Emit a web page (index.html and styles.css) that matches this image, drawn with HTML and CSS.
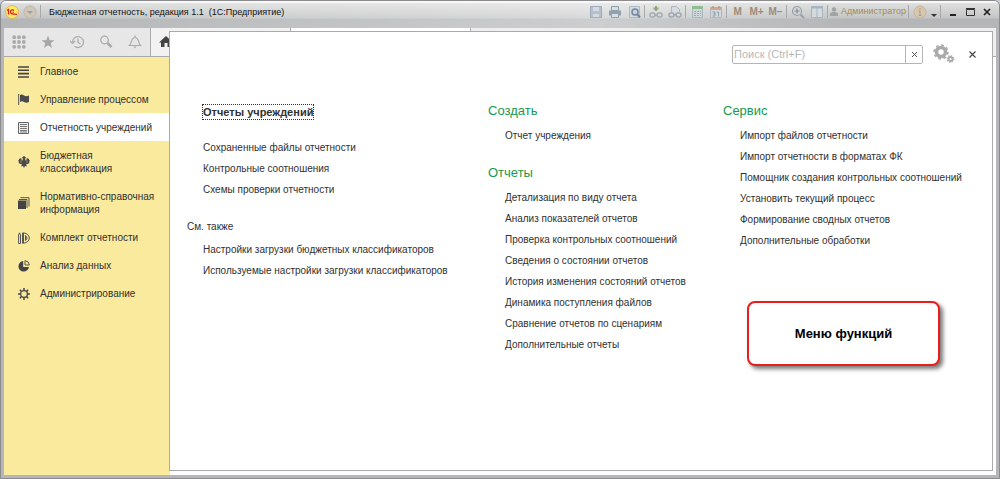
FILE: index.html
```html
<!DOCTYPE html>
<html lang="ru">
<head>
<meta charset="utf-8">
<title>Бюджетная отчетность, редакция 1.1</title>
<link rel="stylesheet" href="styles.css">
</head>
<body>
<div class="window">
  <header class="titlebar">
    <svg class="logo" width="14" height="14" viewBox="0 0 14 14"><circle cx="7" cy="7" r="6.500" fill="#fbe96a" stroke="#e2b94a"/><path d="M2 5.500L3.500 4.500V9.500M8.800 5.700C8 4.200 5.500 4.800 5.500 7S7.200 9.300 12 9.300M8.800 7.300H7.500" fill="none" stroke="#d8261c" stroke-width="1.300"/></svg>
    <button class="round" aria-label="Меню"><svg width="14" height="14" viewBox="0 0 14 14"><circle cx="7" cy="7" r="6.200" fill="#cfc6bb" stroke="#c2b6a6"/><path d="M4 6H10L7 9Z" fill="#a59c92"/></svg></button>
    <i class="sep lead"></i>
    <h1 class="title">Бюджетная отчетность, редакция 1.1&nbsp; (1С:Предприятие)</h1>
    <div class="group">
      <button class="tool" aria-label="Сохранить"><svg width="14" height="14" viewBox="0 0 14 14"><path d="M1.500 1.500H12.500V12.500H1.500Z" fill="#b4c0cb" stroke="#9fadba"/><path d="M4 2H10V6H4ZM4 9H10V12H4Z" fill="#d5dce1"/></svg></button>
      <button class="tool" aria-label="Печать"><svg width="14" height="14" viewBox="0 0 14 14"><path d="M1 5.500H13V10.500H1Z" fill="#91a0ad"/><path d="M3.500 1.500H10.500V5.500H3.500ZM3.500 8.500H10.500V12.500H3.500Z" fill="#d8dee2" stroke="#91a0ad"/></svg></button>
      <button class="tool" aria-label="Просмотр"><svg width="14" height="14" viewBox="0 0 14 14"><path d="M2.500 1.500H12.500V12.500H2.500Z" fill="#d3dae0" stroke="#aebac4"/><circle cx="8" cy="7" r="3" fill="#c6d3de" stroke="#75879a" stroke-width="1.500"/><path d="M10 9L13 12.500" stroke="#75879a" stroke-width="2"/></svg></button>
      <i class="sep"></i>
      <button class="tool" aria-label="Получить ссылку"><svg width="14" height="14" viewBox="0 0 14 14"><path d="M7 1V6M4.500 3.500H9.500" stroke="#91a779" stroke-width="2"/><rect x="1" y="8" width="5" height="4" rx="2" fill="none" stroke="#a4adb4" stroke-width="1.500"/><rect x="8" y="8" width="5" height="4" rx="2" fill="none" stroke="#a4adb4" stroke-width="1.500"/><path d="M5 10H9" stroke="#a4adb4" stroke-width="1.500"/></svg></button>
      <button class="tool" aria-label="Перейти по ссылке"><svg width="14" height="14" viewBox="0 0 14 14"><path d="M3.500 7V1.500H8.500L11.500 4.500V7" fill="#d6dce1" stroke="#a9b5bf"/><rect x="1" y="8" width="5" height="4" rx="2" fill="none" stroke="#9ca9b4" stroke-width="1.500"/><rect x="8" y="8" width="5" height="4" rx="2" fill="none" stroke="#9ca9b4" stroke-width="1.500"/><path d="M5 10H9" stroke="#9ca9b4" stroke-width="1.500"/></svg></button>
      <i class="sep"></i>
      <button class="tool" aria-label="Калькулятор"><svg width="14" height="14" viewBox="0 0 14 14"><path d="M2.500 1.500H12.500V12.500H2.500Z" fill="#cfd8da" stroke="#a9b8bc"/><path d="M2 1H13V4H2Z" fill="#91bd94"/><path d="M4 6.500H11M4 8.500H11M4 10.500H11" stroke="#9aaab5" stroke-dasharray="2 1"/></svg></button>
      <button class="tool" aria-label="Календарь"><svg width="14" height="14" viewBox="0 0 14 14"><path d="M1.500 2.500H12.500V12.500H1.500Z" fill="#d2d8dc" stroke="#abb8c2"/><path d="M1 2H13V5H1Z" fill="#cdaa92"/><path d="M3.500 7H6V11H3.500M4 9H6M8 7.500L9.500 7V11.500" fill="none" stroke="#91a0ad"/><path d="M4 1V3M10 1V3" stroke="#a98469"/></svg></button>
      <i class="sep"></i>
      <button class="tool memory">M</button>
      <button class="tool memory">M+</button>
      <button class="tool memory">M−</button>
      <i class="sep"></i>
      <button class="tool" aria-label="Масштаб"><svg width="14" height="14" viewBox="0 0 14 14"><circle cx="6" cy="6" r="4.500" fill="#d2d5d7" stroke="#9ba0a4" stroke-width="1.200"/><path d="M9.500 9.500L13 13" stroke="#9ba0a4" stroke-width="2"/><path d="M6 3.500V8.500M3.500 6H8.500" stroke="#858b90" stroke-width="1.200"/></svg></button>
      <button class="tool" aria-label="Окна"><svg width="14" height="14" viewBox="0 0 14 14"><path d="M1.500 1.500H12.500V12.500H1.500ZM7 2V12" fill="#d4dade" stroke="#a6b5c2"/><path d="M1 1H13V3.500H1Z" fill="#a6b5c2"/></svg></button>
      <i class="sep"></i>
      <button class="user"><svg width="8" height="10" viewBox="0 0 8 10"><circle cx="4" cy="2.500" r="2.200" fill="#a3a3a3"/><path d="M0 9V7Q0 5 4 5T8 7V9Z" fill="#a3a3a3"/></svg>Администратор</button>
      <i class="sep"></i>
      <button class="tool" aria-label="О программе"><svg width="14" height="14" viewBox="0 0 14 14"><circle cx="7" cy="7" r="6" fill="#d8c8b1" stroke="#c9b395"/><path d="M7 3V4.500M5.500 6H7V10.500M5.500 10.500H8.500" fill="none" stroke="#aaa091" stroke-width="1.200"/></svg></button>
      <button class="tool narrow" aria-label="Еще"><svg width="8" height="14" viewBox="0 0 8 14"><path d="M1 9H7L4 12Z" fill="#333"/></svg></button>
    </div>
    <i class="sep"></i>
    <div class="controls">
      <button class="tool" aria-label="Свернуть"><svg width="14" height="14" viewBox="0 0 14 14"><path d="M4 10H10" stroke="#222" stroke-width="2"/></svg></button>
      <button class="tool" aria-label="Развернуть"><svg width="14" height="14" viewBox="0 0 14 14"><path d="M3.500 4.500H11.500V10.500H3.500ZM3 3.500H12" fill="none" stroke="#333"/></svg></button>
      <button class="tool" aria-label="Закрыть"><svg width="14" height="14" viewBox="0 0 14 14"><path d="M4 4L10 10M10 4L4 10" stroke="#222" stroke-width="1.700"/></svg></button>
    </div>
  </header>

  <div class="client">
    <div class="toolbar">
      <div class="quick">
        <button class="quick-btn" aria-label="Разделы"><svg width="14" height="14" viewBox="0 0 14 14" fill="#aaa"><g id="r"><circle cx="2.200" cy="2.200" r="1.900"/><circle cx="7" cy="2.200" r="1.900"/><circle cx="11.800" cy="2.200" r="1.900"/></g><use href="#r" y="4.800"/><use href="#r" y="9.600"/></svg></button>
        <button class="quick-btn" aria-label="Избранное"><svg width="14" height="14" viewBox="0 0 14 14"><path d="M7 .5L8.700 5.300H13.500L9.700 8.200L11.100 13L7 10.200L2.900 13L4.300 8.200L.5 5.300H5.300Z" fill="#a6a6a6"/></svg></button>
        <button class="quick-btn" aria-label="История"><svg width="14" height="14" viewBox="0 0 14 14" fill="none" stroke="#aaa" stroke-width="1.200"><path d="M2.500 7A5.500 5.500 0 1 1 4.500 11.300M0 6L2.500 8.500L5 6M8 3.500V7.500L10.500 9"/></svg></button>
        <button class="quick-btn" aria-label="Поиск"><svg width="14" height="14" viewBox="0 0 14 14" fill="none" stroke="#aaa"><circle cx="5.500" cy="5" r="3.800" stroke-width="1.200"/><path d="M8.500 8L12.500 12" stroke-width="2.500"/></svg></button>
        <button class="quick-btn" aria-label="Оповещения"><svg width="14" height="14" viewBox="0 0 14 14"><path d="M1.500 10.500C4 8 3 2.500 7 2.500S10 8 12.500 10.500ZM7 .5V2.500" fill="none" stroke="#aaa" stroke-width="1.200"/><path d="M5.500 11.500H8.500L7 13.500Z" fill="#aaa"/></svg></button>
      </div>
      <div class="tab home"><svg width="14" height="12" viewBox="0 0 14 12"><path d="M7 0L0 6.500H2V11H5.500V7H8.500V11H12V6.500H14Z" fill="#444"/></svg></div>
      <div class="tab active"></div>
    </div>

    <nav class="sections">
      <a class="section" href="#"><svg width="12" height="12" viewBox="0 0 12 12"><path d="M0 1H11M0 4.300H11M0 7.600H11M0 11H11" stroke="#444" stroke-width="1.600"/></svg>Главное</a>
      <a class="section" href="#"><svg width="12" height="12" viewBox="0 0 12 12"><path d="M.7 0V11" stroke="#555"/><path d="M2 1Q4 0 6 1.500T11 1.500V8Q8 9.500 6 8T2 8Z" fill="#4a4a4a"/></svg>Управление процессом</a>
      <a class="section current" href="#"><svg width="12" height="12" viewBox="0 0 12 12"><path d="M.5 .5H10.500V11.500H.5Z" fill="#eee" stroke="#666"/><path d="M2 2.500H9M2 4.500H9M2 6.500H9M2 8.500H9M2 10H9" stroke="#777"/></svg>Отчетность учреждений</a>
      <a class="section" href="#"><svg width="12" height="12" viewBox="0 0 12 12"><path d="M5 3L4 1.500L5 .8L6 0L7 .8L8 1.500L7 3L8 5L9 1.500L10 3L11 2.500V4L12 4.500L11 6L11.500 7L9.500 8L8 8.500L9 10.500L7 10L6 12L5 10L3 10.500L4 8.500L2.500 8L.5 7L1 6L0 4.500L1 4V2.500L2 3L3 1.500L4 5Z" fill="#4a4a4a"/><path d="M3 4V7M9 4V7" stroke="#a9a078" stroke-width=".6"/></svg>Бюджетная классификация</a>
      <a class="section" href="#"><svg width="12" height="12" viewBox="0 0 12 12"><path d="M0 3.500H8V12H0Z" fill="#444"/><path d="M1 2.500H9V11M2.500 .7H11V9.500" fill="none" stroke="#555"/></svg>Нормативно-справочная информация</a>
      <a class="section" href="#"><svg width="12" height="12" viewBox="0 0 12 12" fill="none" stroke="#555"><path d="M.6 3L1.500 .8L2.500 3V11.500H.6ZM4.500 .7V11.500M5.500 .8Q11.300 2 11.300 6T5.500 11.300ZM7.500 3.500Q9 4.500 9 6T7.500 8.500Z"/></svg>Комплект отчетности</a>
      <a class="section" href="#"><svg width="12" height="12" viewBox="0 0 12 12"><path d="M5.200 1A5.300 5.300 0 1 0 11 7H5.200Z" fill="#444"/><path d="M7 .6A5 5 0 0 1 11.400 5H7Z" fill="none" stroke="#555"/></svg>Анализ данных</a>
      <a class="section" href="#"><svg width="12" height="12" viewBox="0 0 12 12" fill="none" stroke="#444"><circle cx="6" cy="6" r="3.400" stroke-width="1.300"/><path d="M6 0V2.500M6 9.500V12M0 6H2.500M9.500 6H12M1.800 1.800L3.500 3.500M8.500 8.500L10.200 10.200M10.200 1.800L8.500 3.500M3.500 8.500L1.800 10.200" stroke-width="1.500"/></svg>Администрирование</a>
    </nav>

    <main class="panel">
      <div class="panel-head">
        <div class="search">
          <input class="search-input" type="text" placeholder="Поиск (Ctrl+F)" aria-label="Поиск">
          <button class="search-clear" aria-label="Очистить"><svg width="7" height="7" viewBox="0 0 7 7"><path d="M1 1L6 6M6 1L1 6" stroke="#555"/></svg></button>
        </div>
        <button class="settings" aria-label="Настройки"><svg width="22" height="20" viewBox="0 0 22 20" fill="none" stroke="#aaa"><circle cx="8" cy="8" r="4.500" stroke-width="3.600"/><circle cx="8" cy="8" r="6.900" stroke-width="1.600" stroke-dasharray="2.700 2.720"/><circle cx="17.500" cy="15" r="2" stroke-width="1.800"/><circle cx="17.500" cy="15" r="3.300" stroke-width="1.300" stroke-dasharray="1.300 1.290"/></svg></button>
        <button class="panel-close" aria-label="Закрыть меню"><svg width="9" height="9" viewBox="0 0 9 9"><path d="M1.500 1.500L7.500 7.500M7.500 1.500L1.500 7.500" stroke="#444" stroke-width="1.100"/></svg></button>
      </div>
      <div class="columns">
        <div class="column first">
          <a class="featured" href="#">Отчеты учреждений</a>
          <ul class="links">
            <li><a href="#">Сохраненные файлы отчетности</a></li>
            <li><a href="#">Контрольные соотношения</a></li>
            <li><a href="#">Схемы проверки отчетности</a></li>
          </ul>
          <h2 class="also">См. также</h2>
          <ul class="links">
            <li><a href="#">Настройки загрузки бюджетных классификаторов</a></li>
            <li><a href="#">Используемые настройки загрузки классификаторов</a></li>
          </ul>
        </div>
        <div class="column">
          <section>
            <h2 class="heading">Создать</h2>
            <ul class="links"><li><a href="#">Отчет учреждения</a></li></ul>
          </section>
          <section>
            <h2 class="heading">Отчеты</h2>
            <ul class="links">
              <li><a href="#">Детализация по виду отчета</a></li>
              <li><a href="#">Анализ показателей отчетов</a></li>
              <li><a href="#">Проверка контрольных соотношений</a></li>
              <li><a href="#">Сведения о состоянии отчетов</a></li>
              <li><a href="#">История изменения состояний отчетов</a></li>
              <li><a href="#">Динамика поступления файлов</a></li>
              <li><a href="#">Сравнение отчетов по сценариям</a></li>
              <li><a href="#">Дополнительные отчеты</a></li>
            </ul>
          </section>
        </div>
        <div class="column">
          <section>
            <h2 class="heading">Сервис</h2>
            <ul class="links">
              <li><a href="#">Импорт файлов отчетности</a></li>
              <li><a href="#">Импорт отчетности в форматах ФК</a></li>
              <li><a href="#">Помощник создания контрольных соотношений</a></li>
              <li><a href="#">Установить текущий процесс</a></li>
              <li><a href="#">Формирование сводных отчетов</a></li>
              <li><a href="#">Дополнительные обработки</a></li>
            </ul>
          </section>
          <div class="callout">Меню функций</div>
        </div>
      </div>
    </main>
  </div>
</div>
</body>
</html>
```

FILE: styles.css
```css
* { box-sizing: border-box; }

body {
  margin: 0;
  background: #c9ccd2;
  font: 10px/13px "Liberation Sans", Arial, sans-serif;
  color: #303030;
}

a { color: inherit; text-decoration: none; }

button {
  display: flex;
  align-items: center;
  justify-content: center;
  padding: 0;
  border: 0;
  background: none;
  font: inherit;
  color: inherit;
}

svg { flex: none; display: block; }

.window {
  display: flex;
  flex-direction: column;
  min-height: 100vh;
  padding: 0 3px 3px;
  border: 1px solid #8b8b8d;
  border-radius: 6px 6px 0 0;
  background: #b5b6b9;
  overflow: hidden;
}

/* Title bar */
.titlebar {
  display: flex;
  align-items: center;
  height: 27px;
  margin: 0 -3px;
  padding: 0 4px 8px;
  border-top: 2px solid #f8f8f8;
  background:
    linear-gradient(90deg, #0000 0%, #fff5 60%, #0000 85%),
    linear-gradient(#dedfdf, #c4c6c6 15px, #b3b5b6 16px, #b4b6b7);
}

.round { margin-left: 4px; }

.sep {
  flex: none;
  width: 1px;
  height: 13px;
  margin: 0 1px;
  background: #a9a9ab;
}

.sep.lead { margin: 0 4px 0 3px; }

.title {
  flex: 1;
  margin: 0 0 0 4px;
  font: 9px/14px "Liberation Sans", Arial, sans-serif;
  color: #111;
  white-space: nowrap;
}

.group, .controls { display: flex; align-items: center; }
.controls { margin-left: 2px; }
.tool { width: 19px; height: 15px; }
.controls .tool { width: 17px; }
.tool.narrow { width: 10px; }
.memory { color: #a08b75; font-weight: bold; }
.user { gap: 3px; padding: 0 1px; color: #a38c50; white-space: nowrap; font-size: 9px; }

/* Client area */
.client {
  position: relative;
  flex: 1;
  display: grid;
  grid-template: 29px 1fr / 166px 1fr;
  background: #fdfdfd;
}

.toolbar {
  grid-column: 1 / -1;
  display: flex;
  border-bottom: 1px solid #aaa;
  background: #efefef;
}

.quick {
  display: flex;
  align-items: center;
  gap: 15px;
  width: 147px;
  padding-left: 8px;
  border-right: 1px solid #aaa;
  background: #e7e7e7;
}

.tab { width: 140px; border-right: 1px solid #aaa; }
.home { padding: 8px; background: #f2f2f2; }
.active { width: 180px; background: #fff; }

.sections { background: #faea9e; }

.section {
  display: flex;
  align-items: center;
  gap: 10px;
  padding: 8px 4px 7px 14px;
}

.section.current { background: #fff; }

/* Function menu laid over the work area */
.panel {
  position: absolute;
  inset: 3px 3px 4px 165px;
  display: flex;
  flex-direction: column;
  border: 1px solid #aaa;
  background: #fff;
}

.panel-head {
  display: flex;
  align-items: center;
  justify-content: flex-end;
  padding: 12px 15px 0 0;
}

.search {
  display: flex;
  width: 191px;
  height: 19px;
  border: 1px solid #b5b5b5;
  border-radius: 2px;
}

.search-input {
  flex: 1;
  min-width: 0;
  padding: 0 1px;
  border: 0;
  background: none;
  font: inherit;
  font-size: 11px;
  outline: none;
}

.search-input::placeholder { color: #b8b8b8; }
.search-clear { width: 17px; border-left: 1px solid #b5b5b5; }
.settings { margin-left: 10px; }
.panel-close { margin-left: 13px; }

.columns {
  display: grid;
  grid-template-columns: 302px 235px 1fr;
  padding: 39px 16px 0;
}

.column { display: flex; flex-direction: column; gap: 19px; }
.first { align-items: flex-start; gap: 0; padding-top: 1px; }

.featured {
  margin: 0 0 17px 16px;
  padding: 1px 0;
  border: 1px dotted #333;
  font-size: 11px;
  line-height: 12px;
  font-weight: bold;
}

.links { margin: 0; padding: 0 0 0 17px; list-style: none; }
.links li { line-height: 21px; white-space: nowrap; }

.also { margin: 20px 0 6px 1px; font: inherit; }

.heading {
  margin: 0 0 6px;
  font-size: 13px;
  font-weight: normal;
  line-height: 16px;
  color: #159a4c;
}

.callout {
  width: 193px;
  margin: 31px 0 0 24px;
  padding: 24px 0;
  border: 2px solid #ed1c1c;
  border-radius: 8px;
  background: #fff;
  box-shadow: 3px 3px 4px #777;
  color: #000;
  font-size: 13px;
  font-weight: bold;
  line-height: 13px;
  text-align: center;
}
```
